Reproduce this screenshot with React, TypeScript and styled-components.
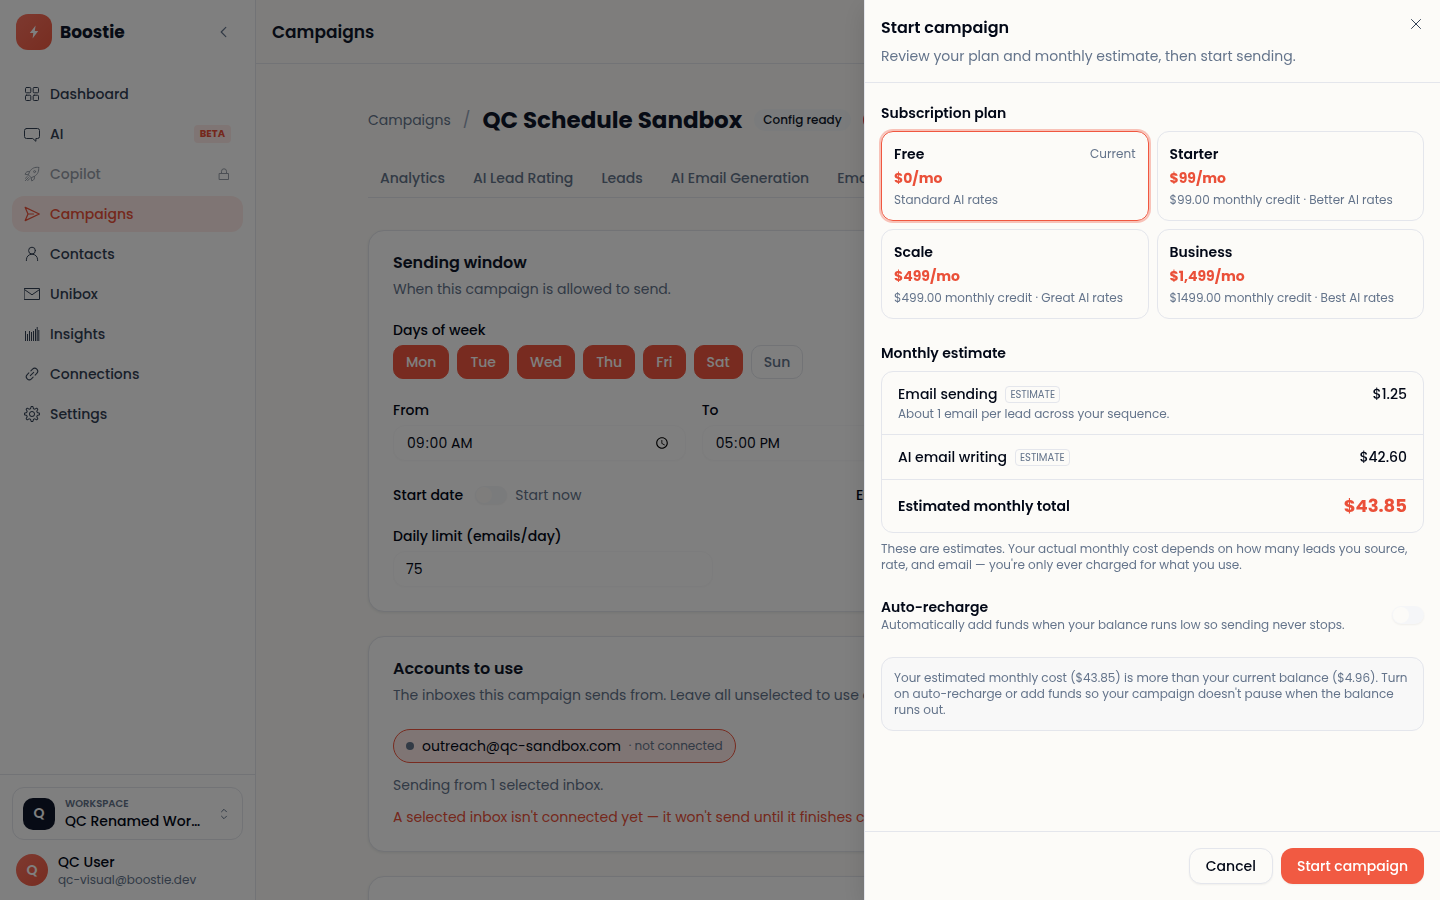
import React from 'react';
import styled, { createGlobalStyle, css } from 'styled-components';
import { SlSettings } from 'react-icons/sl';

const c = {
  ink: '#0f172a',
  body: '#020817',
  nav: '#334155',
  muted: '#64748b',
  primary: '#f05740',
  accent: '#ea5039',
  line: '#e4e6ec',
  canvas: '#fcfbf8',
  white: '#ffffff',
};

const GlobalStyle = createGlobalStyle`
  *, *::before, *::after { box-sizing: border-box; }
  body { margin: 0; background: ${c.canvas}; }
  body, button, input { font-family: Poppins, Inter, "Liberation Sans", sans-serif; }
  h1, h2, h3, p, ul { margin: 0; padding: 0; }
  button { cursor: pointer; }
`;

const Shell = styled.div`
  display: grid;
  grid-template-columns: 256px minmax(0, 1fr);
  height: 100vh;
  overflow: hidden;
  color: ${c.body};
  font-size: 14px;
  line-height: 20px;
`;

/* Sidebar */
const Sidebar = styled.aside`
  display: flex;
  flex-direction: column;
  background: ${c.white};
  border-right: 1px solid ${c.line};
`;
const Brand = styled.div`
  display: flex;
  align-items: center;
  gap: 8px;
  height: 64px;
  padding: 0 16px;
`;
const Logo = styled.span`
  display: grid;
  place-items: center;
  width: 36px;
  height: 36px;
  border-radius: 12px;
  background: linear-gradient(135deg, #fb7360, #f05a42);
`;
const BrandName = styled.span`
  flex: 1;
  font-size: 17px;
  font-weight: 700;
  color: ${c.ink};
`;
const IconButton = styled.button`
  display: grid;
  place-items: center;
  width: 32px;
  height: 32px;
  padding: 0;
  border: 0;
  background: none;
  color: ${c.muted};
`;
const Nav = styled.nav`
  flex: 1;
  display: flex;
  flex-direction: column;
  gap: 4px;
  padding: 12px;
`;
const NavItem = styled.a<{ $active?: boolean; $locked?: boolean }>`
  display: flex;
  align-items: center;
  gap: 10px;
  height: 36px;
  padding: 0 12px;
  border-radius: 12px;
  font-weight: 500;
  text-decoration: none;
  color: ${p => (p.$active ? c.accent : c.nav)};
  background: ${p => (p.$active ? '#feebe8' : 'transparent')};
  opacity: ${p => (p.$locked ? 0.5 : 1)};
  svg { flex: none; }
`;
const NavLabel = styled.span`flex: 1;`;
const Beta = styled.span`
  padding: 0 6px;
  border-radius: 4px;
  background: #feebe8;
  color: ${c.accent};
  font-size: 10px;
  line-height: 18px;
  font-weight: 700;
`;
const SideFooter = styled.div`
  display: flex;
  flex-direction: column;
  gap: 8px;
  padding: 12px 12px 8px;
  border-top: 1px solid ${c.line};
`;
const Workspace = styled.button`
  display: flex;
  align-items: center;
  gap: 10px;
  padding: 8px 10px;
  border: 1px solid ${c.line};
  border-radius: 12px;
  background: none;
  text-align: left;
  color: ${c.muted};
`;
const Initial = styled.span<{ $round?: boolean }>`
  display: grid;
  place-items: center;
  flex: none;
  width: 32px;
  height: 32px;
  border-radius: ${p => (p.$round ? '50%' : '10px')};
  background: ${p => (p.$round ? 'linear-gradient(135deg, #fb7360, #f05a42)' : c.ink)};
  color: ${c.white};
  font-size: 14px;
  font-weight: 600;
`;
const SideText = styled.span`
  display: flex;
  flex-direction: column;
  flex: 1;
  min-width: 0;
`;
const Overline = styled.span`
  font-size: 10px;
  line-height: 15px;
  font-weight: 600;
  color: ${c.muted};
`;
const SideName = styled.span`
  overflow: hidden;
  text-overflow: ellipsis;
  white-space: nowrap;
  font-size: 14px;
  line-height: 20px;
  font-weight: 500;
  color: ${c.body};
`;
const SideSmall = styled.span`
  font-size: 12px;
  line-height: 16px;
  color: ${c.muted};
`;
const User = styled.div`
  display: flex;
  align-items: center;
  gap: 10px;
  padding: 4px;
`;

/* Main column */
const Main = styled.main`
  min-width: 0;
  overflow: hidden;
  background: ${c.canvas};
`;
const TopBar = styled.header`
  display: flex;
  align-items: center;
  height: 64px;
  padding: 0 16px;
  border-bottom: 1px solid ${c.line};
  font-size: 17px;
  font-weight: 600;
  color: ${c.ink};
`;
const Page = styled.div`
  max-width: 1024px;
  margin: 0 auto;
  padding: 40px 32px;
`;
const TitleRow = styled.div`
  display: flex;
  align-items: center;
  gap: 12px;
  height: 32px;
  white-space: nowrap;
`;
const Crumb = styled.a`
  color: ${c.muted};
  text-decoration: none;
`;
const Slash = styled.span`
  font-size: 16px;
  color: #94a3b8;
`;
const PageTitle = styled.h1`
  font-size: 23px;
  line-height: 32px;
  font-weight: 700;
  color: ${c.ink};
`;
const Pill = styled.span<{ $alert?: boolean }>`
  padding: 0 8px;
  border: 1px solid transparent;
  border-radius: 11px;
  font-size: 12px;
  font-weight: 500;
  background: ${p => (p.$alert ? '#ef4444' : '#f5f7f9')};
  color: ${p => (p.$alert ? c.white : c.ink)};
`;
const Tabs = styled.nav`
  display: flex;
  gap: 4px;
  margin: 24px 0 32px;
  padding-bottom: 1px;
  border-bottom: 1px solid ${c.line};
  white-space: nowrap;
  overflow: hidden;
`;
const Tab = styled.a`
  padding: 8px 12px;
  font-weight: 500;
  color: ${c.muted};
  text-decoration: none;
`;
const Card = styled.section`
  margin-bottom: 24px;
  padding: 20px 24px 24px;
  border: 1px solid ${c.line};
  border-radius: 16px;
  background: ${c.white};
  box-shadow: 0 1px 3px rgba(15, 23, 42, 0.08);
`;
const CardTitle = styled.h2`
  font-size: 16px;
  line-height: 24px;
  font-weight: 600;
  color: ${c.ink};
`;
const CardText = styled.p`
  margin: 4px 0 24px;
  color: ${c.muted};
`;
const Fields = styled.div`
  display: flex;
  flex-direction: column;
  gap: 24px;
`;
const Field = styled.div`
  display: flex;
  flex-direction: column;
  gap: 8px;
`;
const labelText = css`
  line-height: 14px;
  font-weight: 500;
  color: ${c.body};
`;
const Label = styled.label`${labelText}`;
const GroupLabel = styled.span`${labelText}`;
const Columns = styled.div<{ $count: number }>`
  display: grid;
  grid-template-columns: repeat(${p => p.$count}, minmax(0, 1fr));
  gap: 16px;
`;
const Days = styled.div`
  display: flex;
  gap: 8px;
`;
const Day = styled.button<{ $on: boolean }>`
  height: 34px;
  padding: 0 12px;
  border: 1px solid ${p => (p.$on ? c.primary : c.line)};
  border-radius: 10px;
  background: ${p => (p.$on ? c.primary : c.white)};
  color: ${p => (p.$on ? c.white : c.muted)};
  font-size: 14px;
  font-weight: 500;
`;
const TextInput = styled.input`
  width: 100%;
  max-width: 320px;
  height: 36px;
  padding: 0 12px;
  border: 1px solid #f9f9fa;
  border-radius: 12px;
  background: ${c.white};
  box-shadow: 0 1px 2px rgba(0, 0, 0, 0.02);
  color: ${c.body};
  font-size: 14px;
`;
const DateRow = styled.div`
  display: flex;
  align-items: center;
  gap: 12px;
  height: 20px;
`;
const SwitchGroup = styled.span`
  display: flex;
  align-items: center;
  gap: 8px;
  color: ${c.muted};
`;
const Switch = styled.input`
  appearance: none;
  flex: none;
  display: flex;
  align-items: center;
  width: 32px;
  height: 18px;
  margin: 0;
  border-radius: 9px;
  background: #f5f6f8;
  box-shadow: 0 1px 2px rgba(0, 0, 0, 0.05);
  &::before {
    content: '';
    width: 16px;
    height: 16px;
    margin: 0 1px;
    border-radius: 50%;
    background: ${c.canvas};
  }
`;
const Inbox = styled.button`
  display: inline-flex;
  align-items: center;
  gap: 8px;
  height: 34px;
  padding: 0 12px;
  border: 1px solid ${c.primary};
  border-radius: 17px;
  background: #feebe8;
  color: ${c.body};
  font-size: 14px;
`;
const Dot = styled.span`
  width: 8px;
  height: 8px;
  border-radius: 50%;
  background: ${c.muted};
`;
const Note = styled.p<{ $error?: boolean }>`
  margin-top: 12px;
  white-space: nowrap;
  overflow: hidden;
  color: ${p => (p.$error ? c.accent : c.muted)};
`;

/* Drawer */
const Overlay = styled.div`
  position: fixed;
  inset: 0;
  background: rgba(0, 0, 0, 0.5);
`;
const Drawer = styled.div`
  position: fixed;
  top: 0;
  right: 0;
  bottom: 0;
  display: flex;
  flex-direction: column;
  width: 100%;
  max-width: 576px;
  border-left: 1px solid ${c.line};
  background: ${c.canvas};
  color: ${c.body};
  font-size: 14px;
  line-height: 20px;
  box-shadow: 0 8px 24px rgba(0, 0, 0, 0.12);
`;
const DrawerHead = styled.header`
  display: flex;
  justify-content: space-between;
  align-items: flex-start;
  padding: 16px;
  border-bottom: 1px solid ${c.line};
`;
const DrawerTitle = styled.h2`
  margin-bottom: 6px;
  font-size: 16px;
  line-height: 24px;
  font-weight: 600;
`;
const Muted = styled.p`color: ${c.muted};`;
const Close = styled.button`
  display: grid;
  place-items: center;
  width: 16px;
  height: 16px;
  padding: 0;
  border: 0;
  background: none;
  color: ${c.nav};
`;
const DrawerBody = styled.div`
  flex: 1;
  display: flex;
  flex-direction: column;
  gap: 24px;
  min-height: 0;
  overflow: auto;
  padding: 20px 16px;
`;
const Block = styled.section`
  display: flex;
  flex-direction: column;
  gap: 8px;
`;
const BlockTitle = styled.h3`
  font-size: 14px;
  line-height: 20px;
  font-weight: 600;
`;
const Plans = styled.div`
  display: grid;
  grid-template-columns: 1fr 1fr;
  gap: 8px;
`;
const Plan = styled.button<{ $selected?: boolean }>`
  display: flex;
  flex-direction: column;
  gap: 4px;
  padding: 12px;
  border: 1px solid ${p => (p.$selected ? c.primary : c.line)};
  border-radius: 12px;
  background: none;
  box-shadow: ${p => (p.$selected ? '0 0 0 2px rgba(240, 90, 66, 0.35)' : 'none')};
  text-align: left;
  color: ${c.body};
  font-size: 14px;
  line-height: 20px;
`;
const PlanTop = styled.span`
  display: flex;
  justify-content: space-between;
  align-self: stretch;
  font-weight: 600;
`;
const Price = styled.span`
  font-weight: 700;
  color: ${c.accent};
`;
const Small = styled.span`
  font-size: 12px;
  line-height: 16px;
  font-weight: 400;
  color: ${c.muted};
`;
const Current = styled(Small)`line-height: 20px;`;
const Estimate = styled.div`
  border: 1px solid ${c.line};
  border-radius: 12px;
`;
const Line = styled.div`
  display: flex;
  justify-content: space-between;
  padding: 12px 16px;
  font-weight: 500;
  & + & { border-top: 1px solid ${c.line}; }
`;
const LineText = styled.div`
  display: flex;
  flex-direction: column;
  gap: 2px;
`;
const LineName = styled.span`
  display: flex;
  align-items: center;
  gap: 8px;
`;
const Tag = styled.span`
  padding: 0 4px;
  border: 1px solid ${c.line};
  border-radius: 4px;
  font-size: 10px;
  line-height: 15px;
  font-weight: 400;
  color: ${c.muted};
`;
const TotalName = styled.span`
  line-height: 28px;
  font-weight: 600;
`;
const Total = styled.span`
  font-size: 18px;
  line-height: 28px;
  font-weight: 700;
  color: ${c.accent};
`;
const Recharge = styled.div`
  display: flex;
  align-items: center;
  justify-content: space-between;
`;
const RechargeText = styled.label`
  display: flex;
  flex-direction: column;
  font-weight: 600;
`;
const Notice = styled.p`
  padding: 12px;
  border: 1px solid ${c.line};
  border-radius: 12px;
  background: #f8f8f8;
  font-size: 12px;
  line-height: 16px;
  color: ${c.muted};
`;
const DrawerFoot = styled.footer`
  display: flex;
  justify-content: flex-end;
  gap: 8px;
  padding: 16px;
  border-top: 1px solid ${c.line};
`;
const Action = styled.button<{ $primary?: boolean }>`
  height: 36px;
  padding: 0 16px;
  border: ${p => (p.$primary ? '0' : `1px solid ${c.line}`)};
  border-radius: 12px;
  background: ${p => (p.$primary ? '#f15a42' : c.canvas)};
  box-shadow: 0 1px 2px rgba(0, 0, 0, 0.05);
  color: ${p => (p.$primary ? c.white : c.body)};
  font-size: 14px;
  font-weight: 500;
`;

/* Thin line icons on a 16px grid */
const Icon = ({ size = 16, children }: { size?: number; children: React.ReactNode }) => (
  <svg width={size} height={size} viewBox={`0 0 ${size} ${size}`} fill="none" stroke="currentColor" strokeLinecap="round" strokeLinejoin="round" aria-hidden="true">
    {children}
  </svg>
);
const GridIcon = () => (
  <Icon>
    <rect x="1.5" y="1.5" width="5.3" height="5.3" rx="1" />
    <rect x="9.2" y="1.5" width="5.3" height="5.3" rx="1" />
    <rect x="1.5" y="9.2" width="5.3" height="5.3" rx="1" />
    <rect x="9.2" y="9.2" width="5.3" height="5.3" rx="1" />
  </Icon>
);
const BubbleIcon = () => (
  <Icon>
    <path d="M2.5 2.5h11a2 2 0 0 1 2 2v6a2 2 0 0 1-2 2h-1.6v2.8L8.7 12.5H2.5a2 2 0 0 1-2-2v-6a2 2 0 0 1 2-2z" />
  </Icon>
);
const RocketIcon = () => (
  <Icon>
    <path d="M14.6 1.4C10.8.8 7.8 2.2 5.6 5.6L4.3 8.8l2.9 2.9 3.2-1.3c3.4-2.2 4.8-5.2 4.2-9z" />
    <path d="M5.6 5.6C3.4 5 1.8 6 1.1 8.3l3.2.5M10.4 10.4c.6 2.2-.4 3.8-2.7 4.5l-.5-3.2" />
    <path d="M3.4 10.3 1.4 12.3M4.4 11.6l-3 3M5.7 12.6l-2 2" />
    <circle cx="10.6" cy="5.6" r="1" />
  </Icon>
);
const PlaneIcon = () => (
  <Icon><path strokeWidth="1.2" d="M1.2 1.4 15.3 8 1.2 14.6 4 8zM4 8h5.5" /></Icon>
);
const UserIcon = () => (
  <Icon>
    <circle cx="8" cy="4.6" r="3.4" />
    <path d="M2.4 14.6v-.8C2.4 10.6 4.8 8.2 8 8.2s5.6 2.4 5.6 5.6v.8" />
  </Icon>
);
const MailIcon = () => (
  <Icon><path d="M.5 2.5h15v11H.5zM.8 3.8 8 8.8l7.2-5" /></Icon>
);
const InsightsIcon = () => (
  <Icon>
    <path strokeLinecap="butt" d="M1.5 5v10M3.5 8v7M5.5 5v10M7.5 6v9M9.5 5v10M11.5 3v12M13.2 1v14M14.8 4v11" />
  </Icon>
);
const LinkIcon = () => (
  <Icon>
    <path transform="rotate(-45 8 8)" d="M6.6 5H4.2a3 3 0 0 0 0 6h2.4M9.4 5h2.4a3 3 0 0 1 0 6H9.4M5.6 8h4.8" />
  </Icon>
);
const SettingsIcon = () => <SlSettings size={16} />;
const LockIcon = () => (
  <Icon size={14}>
    <path d="M2.5 6.5h9v6h-9zM4.5 6.5V4.3a2.5 2.5 0 0 1 5 0v2.2" />
  </Icon>
);

const navItems = [
  { label: 'Dashboard', icon: GridIcon },
  { label: 'AI', icon: BubbleIcon, beta: true },
  { label: 'Copilot', icon: RocketIcon, locked: true },
  { label: 'Campaigns', icon: PlaneIcon, active: true },
  { label: 'Contacts', icon: UserIcon },
  { label: 'Unibox', icon: MailIcon },
  { label: 'Insights', icon: InsightsIcon },
  { label: 'Connections', icon: LinkIcon },
  { label: 'Settings', icon: SettingsIcon },
];
const tabs = ['Analytics', 'AI Lead Rating', 'Leads', 'AI Email Generation', 'Email Sequence'];
const days = ['Mon', 'Tue', 'Wed', 'Thu', 'Fri', 'Sat', 'Sun'];
const plans = [
  { name: 'Free', price: '$0/mo', detail: 'Standard AI rates', current: true },
  { name: 'Starter', price: '$99/mo', detail: '$99.00 monthly credit · Better AI rates' },
  { name: 'Scale', price: '$499/mo', detail: '$499.00 monthly credit · Great AI rates' },
  { name: 'Business', price: '$1,499/mo', detail: '$1499.00 monthly credit · Best AI rates' },
];

export default function App() {
  return (
    <>
      <GlobalStyle />
      <Shell>
        <Sidebar>
          <Brand>
            <Logo>
              <svg width="16" height="16" viewBox="0 0 16 16" fill="#fff" aria-hidden="true">
                <path d="M9.6 1.4 3.8 9.1h3.5L6.6 14.6 12.2 6.9H8.8z" />
              </svg>
            </Logo>
            <BrandName>Boostie</BrandName>
            <IconButton aria-label="Collapse sidebar">
              <Icon><path strokeWidth="1.2" d="M10.8 3.4 6.2 8l4.6 4.6" /></Icon>
            </IconButton>
          </Brand>
          <Nav>
            {navItems.map(({ label, icon: NavIcon, beta, locked, active }) => (
              <NavItem key={label} href="#" $active={active} $locked={locked}>
                <NavIcon />
                <NavLabel>{label}</NavLabel>
                {beta && <Beta>BETA</Beta>}
                {locked && <LockIcon />}
              </NavItem>
            ))}
          </Nav>
          <SideFooter>
            <Workspace>
              <Initial>Q</Initial>
              <SideText>
                <Overline>WORKSPACE</Overline>
                <SideName>QC Renamed Workspace</SideName>
              </SideText>
              <Icon><path d="M5.5 5.8 8 3.3l2.5 2.5M5.5 10.2 8 12.7l2.5-2.5" /></Icon>
            </Workspace>
            <User>
              <Initial $round>Q</Initial>
              <SideText>
                <SideName>QC User</SideName>
                <SideSmall>qc-visual@boostie.dev</SideSmall>
              </SideText>
            </User>
          </SideFooter>
        </Sidebar>
        <Main>
          <TopBar>Campaigns</TopBar>
          <Page>
            <TitleRow>
              <Crumb href="#">Campaigns</Crumb>
              <Slash>/</Slash>
              <PageTitle>QC Schedule Sandbox</PageTitle>
              <Pill>Config ready</Pill>
              <Pill $alert>Paused</Pill>
            </TitleRow>
            <Tabs>
              {tabs.map(t => <Tab key={t} href="#">{t}</Tab>)}
            </Tabs>
            <Card>
              <CardTitle>Sending window</CardTitle>
              <CardText>When this campaign is allowed to send.</CardText>
              <Fields>
                <Field>
                  <GroupLabel>Days of week</GroupLabel>
                  <Days>
                    {days.map(d => <Day key={d} $on={d !== 'Sun'}>{d}</Day>)}
                  </Days>
                </Field>
                <Columns $count={3}>
                  <Field>
                    <Label htmlFor="from">From</Label>
                    <TextInput id="from" type="time" defaultValue="09:00" />
                  </Field>
                  <Field>
                    <Label htmlFor="to">To</Label>
                    <TextInput id="to" type="time" defaultValue="17:00" />
                  </Field>
                </Columns>
                <Columns $count={2}>
                  <DateRow>
                    <Label htmlFor="start">Start date</Label>
                    <SwitchGroup>
                      <Switch id="start" type="checkbox" />
                      Start now
                    </SwitchGroup>
                  </DateRow>
                  <DateRow>
                    <Label htmlFor="end">End date</Label>
                    <Switch id="end" type="checkbox" />
                  </DateRow>
                </Columns>
                <Field>
                  <Label htmlFor="limit">Daily limit (emails/day)</Label>
                  <TextInput id="limit" type="text" inputMode="numeric" defaultValue="75" />
                </Field>
              </Fields>
            </Card>
            <Card>
              <CardTitle>Accounts to use</CardTitle>
              <CardText>The inboxes this campaign sends from. Leave all unselected to use every inbox.</CardText>
              <Inbox>
                <Dot />
                outreach@qc-sandbox.com
                <Small>· not connected</Small>
              </Inbox>
              <Note>Sending from 1 selected inbox.</Note>
              <Note $error>A selected inbox isn't connected yet — it won't send until it finishes connecting.</Note>
            </Card>
            <Card>
              <CardTitle>Tracking</CardTitle>
            </Card>
          </Page>
        </Main>
      </Shell>
      <Overlay />
      <Drawer role="dialog" aria-labelledby="drawer-title">
        <DrawerHead>
          <div>
            <DrawerTitle id="drawer-title">Start campaign</DrawerTitle>
            <Muted>Review your plan and monthly estimate, then start sending.</Muted>
          </div>
          <Close aria-label="Close">
            <Icon><path d="m3.5 3.5 9 9m0-9-9 9" /></Icon>
          </Close>
        </DrawerHead>
        <DrawerBody>
          <Block>
            <BlockTitle>Subscription plan</BlockTitle>
            <Plans>
              {plans.map(p => (
                <Plan key={p.name} $selected={p.current}>
                  <PlanTop>{p.name}{p.current && <Current>Current</Current>}</PlanTop>
                  <Price>{p.price}</Price>
                  <Small>{p.detail}</Small>
                </Plan>
              ))}
            </Plans>
          </Block>
          <Block>
            <BlockTitle>Monthly estimate</BlockTitle>
            <Estimate>
              <Line>
                <LineText>
                  <LineName>Email sending <Tag>ESTIMATE</Tag></LineName>
                  <Small>About 1 email per lead across your sequence.</Small>
                </LineText>
                <span>$1.25</span>
              </Line>
              <Line>
                <LineName>AI email writing <Tag>ESTIMATE</Tag></LineName>
                <span>$42.60</span>
              </Line>
              <Line>
                <TotalName>Estimated monthly total</TotalName>
                <Total>$43.85</Total>
              </Line>
            </Estimate>
            <Small>
              These are estimates. Your actual monthly cost depends on how many leads you source, rate, and email — you're only ever charged for what you use.
            </Small>
          </Block>
          <Recharge>
            <RechargeText htmlFor="recharge">
              Auto-recharge
              <Small>Automatically add funds when your balance runs low so sending never stops.</Small>
            </RechargeText>
            <Switch id="recharge" type="checkbox" />
          </Recharge>
          <Notice>
            Your estimated monthly cost ($43.85) is more than your current balance ($4.96). Turn on auto-recharge or add funds so your campaign doesn't pause when the balance runs out.
          </Notice>
        </DrawerBody>
        <DrawerFoot>
          <Action>Cancel</Action>
          <Action $primary>Start campaign</Action>
        </DrawerFoot>
      </Drawer>
    </>
  );
}
